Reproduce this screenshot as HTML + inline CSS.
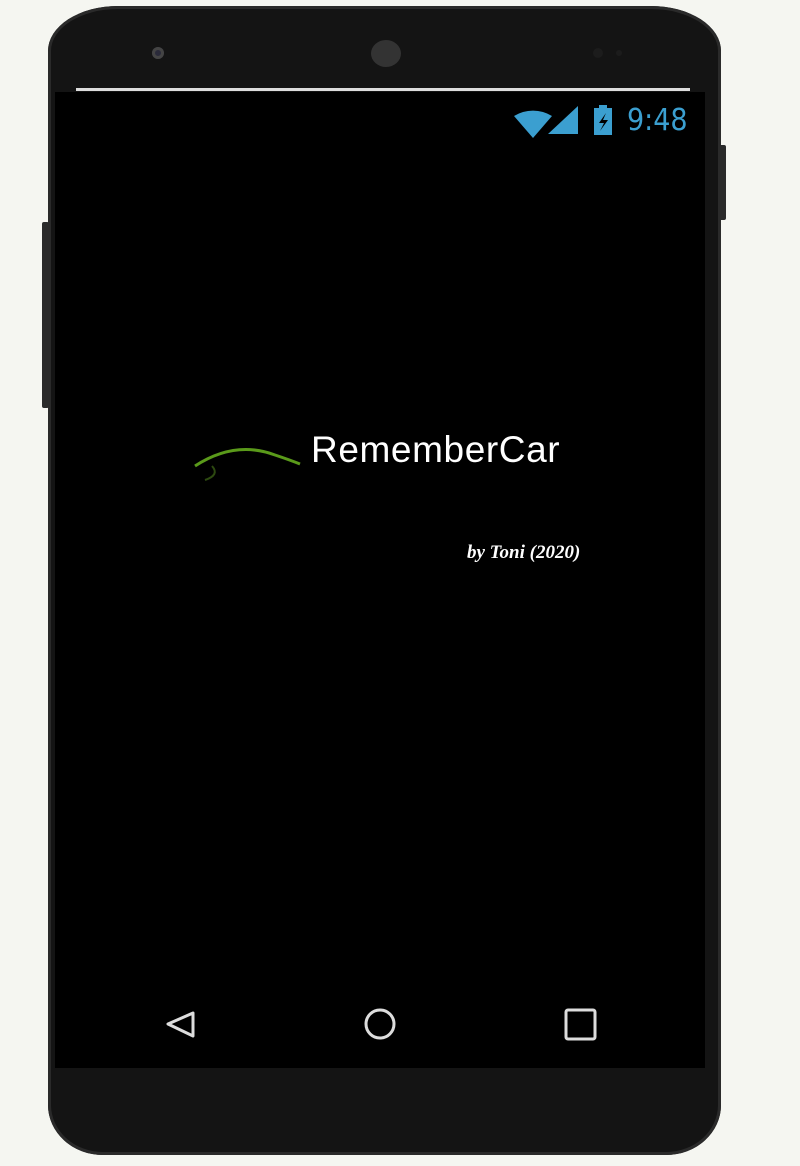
<!DOCTYPE html>
<html><head><style>
html,body{margin:0;padding:0;width:800px;height:1166px;background:#f5f6f1;overflow:hidden;font-family:"Liberation Sans",sans-serif}
.phone{position:absolute;left:48px;top:6px;width:673px;height:1149px;background:#141414;border-radius:70px 70px 55px 55px / 45px 45px 50px 50px;box-shadow:inset 0 0 0 3px #2a2a2a}
.btn{position:absolute;background:#2a2a2a}
.screen{position:absolute;left:55px;top:92px;width:650px;height:976px;background:#000}
.line{position:absolute;left:76px;top:88px;width:614px;height:3px;background:#ddd}
</style></head><body>
<div class="btn" style="left:42px;top:222px;width:7px;height:186px;border-radius:2px"></div>
<div class="btn" style="left:719px;top:145px;width:7px;height:75px;border-radius:2px"></div>
<div class="phone"></div>
<div style="position:absolute;left:152px;top:47px;width:12px;height:12px;border-radius:50%;background:#2a2a3a;box-shadow:inset 0 0 0 3px #444"></div>
<div style="position:absolute;left:371px;top:40px;width:30px;height:27px;border-radius:50%;background:#333"></div>
<div style="position:absolute;left:593px;top:48px;width:10px;height:10px;border-radius:50%;background:#1c1c1c"></div>
<div style="position:absolute;left:616px;top:50px;width:6px;height:6px;border-radius:50%;background:#1c1c1c"></div>
<div class="line"></div>
<div class="screen"></div>
<svg style="position:absolute;left:0;top:0" width="800" height="1166">
<g fill="#3b9fd0">
<path d="M514 116 A36 36 0 0 1 552 116 L533 138 Z"/>
<path d="M548 134 L578 106 L578 134 Z"/>
<rect x="594" y="108" width="18" height="27"/>
<rect x="599" y="105" width="8" height="4"/>
</g>
<path d="M606 113 L599 123 L604 123 L600 131 L608 120 L603 120 Z" fill="#000"/>
<path d="M195 466 Q235 440 275 455 Q290 460 300 464" stroke="#5a9a1a" stroke-width="3" fill="none"/>
<path d="M212 466 Q220 475 205 480" stroke="#2d4a10" stroke-width="2" fill="none"/>
<path d="M193 1024 L193 1013 L168 1024 L193 1036 Z" stroke="#ddd" stroke-width="3" fill="none" stroke-linejoin="round"/>
<ellipse cx="380" cy="1024" rx="14" ry="14" stroke="#ddd" stroke-width="3" fill="none"/>
<rect x="566" y="1010" width="29" height="29" rx="2" stroke="#ddd" stroke-width="3" fill="none"/>
</svg>
<div style="position:absolute;left:627px;top:103px;color:#3b9fd0;font-size:30px;font-family:'DejaVu Sans Condensed','DejaVu Sans',sans-serif">9:48</div>
<div style="position:absolute;left:311px;top:429px;color:#fff;font-size:37px;letter-spacing:0.6px">RememberCar</div>
<div style="position:absolute;left:467px;top:542px;color:#fff;font-size:19px;font-style:italic;font-weight:bold;font-family:'Liberation Serif',serif">by Toni (2020)</div>
</body></html>
